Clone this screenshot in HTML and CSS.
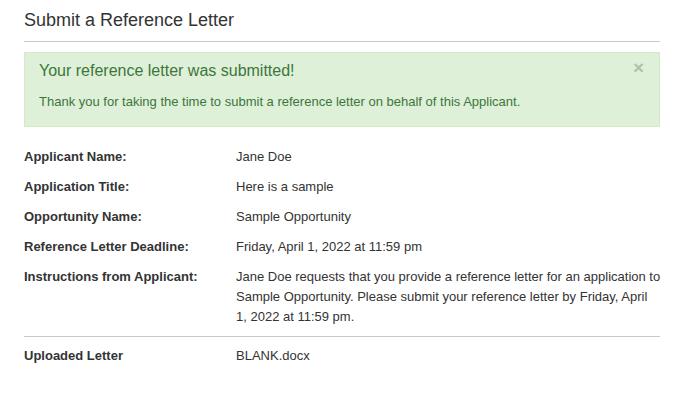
FILE: index.html
```html
<!DOCTYPE html>
<html>
<head>
<meta charset="utf-8">
<link rel="stylesheet" href="styles.css">
</head>
<body>
<div class="page">
  <h1 class="title">Submit a Reference Letter</h1>
  <div class="alert">
    <span class="close">&times;</span>
    <h2 class="alert-title">Your reference letter was submitted!</h2>
    <p class="alert-body">Thank you for taking the time to submit a reference letter on behalf of this Applicant.</p>
  </div>
  <div class="details">
    <div class="label">Applicant Name:</div>
    <div class="value">Jane Doe</div>
    <div class="label">Application Title:</div>
    <div class="value">Here is a sample</div>
    <div class="label">Opportunity Name:</div>
    <div class="value">Sample Opportunity</div>
    <div class="label">Reference Letter Deadline:</div>
    <div class="value">Friday, April 1, 2022 at 11:59 pm</div>
    <div class="label">Instructions from Applicant:</div>
    <div class="value">Jane Doe requests that you provide a reference letter for an application to Sample Opportunity. Please submit your reference letter by Friday, April 1, 2022 at 11:59 pm.</div>
  </div>
  <div class="upload">
    <div class="label">Uploaded Letter</div>
    <div class="value">BLANK.docx</div>
  </div>
</div>
</body>
</html>
```
FILE: styles.css
```css
* { box-sizing: border-box; }
body {
  margin: 0;
  background: #fff;
  font-family: "Liberation Sans", Arial, sans-serif;
  font-size: 13px;
  line-height: 20px;
  color: #333;
}
.page {
  width: 636px;
  margin: 0 0 0 24px;
  padding-top: 8px;
}
.title {
  margin: 0;
  font-size: 18px;
  font-weight: normal;
  line-height: 24px;
  padding-bottom: 9px;
  border-bottom: 1px solid #c8c8c8;
  color: #333;
}
.alert {
  position: relative;
  margin-top: 10px;
  background: #dff0d8;
  border: 1px solid #d6e9c6;
  color: #3c763d;
  padding: 8px 15px 14px 14px;
}
.close {
  position: absolute;
  right: 15px;
  top: 3px;
  font-size: 19px;
  font-weight: bold;
  color: #000;
  opacity: 0.2;
  line-height: 24px;
}
.alert-title {
  margin: 0;
  font-size: 16px;
  font-weight: normal;
  line-height: 20px;
}
.alert-body {
  margin: 11px 0 0;
  font-size: 13px;
  line-height: 20px;
}
.details {
  display: grid;
  grid-template-columns: 212px 1fr;
  row-gap: 10px;
  margin-top: 20px;
  padding-bottom: 9px;
  border-bottom: 1px solid #c8c8c8;
}
.label { font-weight: bold; }
.details .value { margin-right: -1.5px; }
.upload {
  display: grid;
  grid-template-columns: 212px 1fr;
  margin-top: 9px;
}
```
